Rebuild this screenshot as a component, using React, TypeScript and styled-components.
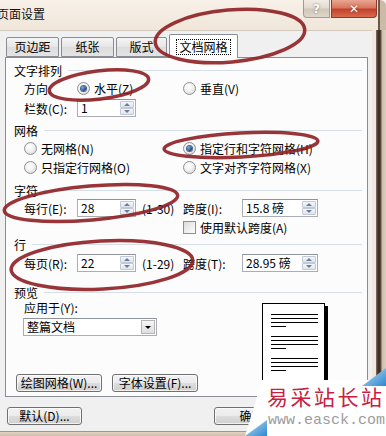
import React from "react"
import styled, { createGlobalStyle } from "styled-components"

const GlobalStyle = createGlobalStyle`
  html, body {
    margin: 0;
    padding: 0;
    background: #fff;
  }
  body {
    font-family: "Noto Sans CJK SC", "Liberation Sans", sans-serif;
    font-size: 12px;
    color: #000;
  }
`

const Window = styled.div`
  position: relative;
  width: 386px;
  height: 436px;
  overflow: hidden;
  display: flex;
  flex-direction: column;
  background: #ece2d5;
`

const TitleBar = styled.div`
  height: 30px;
  display: flex;
  align-items: flex-start;
  background: linear-gradient(#f8f1e9, #f0e6da);
`

const Title = styled.div`
  margin-left: -3px;
  margin-top: 6px;
  font-size: 12px;
  line-height: 16px;
  color: #111;
`

const CaptionButton = styled.div<{ $close?: boolean; $w: number }>`
  width: ${(p) => p.$w}px;
  height: 18px;
  box-sizing: border-box;
  display: flex;
  align-items: center;
  justify-content: center;
  border: 1px solid ${(p) => (p.$close ? "#8c3a2a" : "#a89a8a")};
  border-top: none;
  margin-left: ${(p) => (p.$close ? 1 : 0)}px;
  border-radius: ${(p) => (p.$close ? "0 0 4px 0" : "0 0 0 4px")};
  background: ${(p) =>
    p.$close
      ? "linear-gradient(#e9a591 0%, #d9775f 45%, #c4402a 55%, #d66a4f 100%)"
      : "linear-gradient(#f3ece4 0%, #e4dbd1 45%, #d2c6b9 55%, #e0d6cb 100%)"};
  color: #fff;
  font-family: "DejaVu Sans", sans-serif;
  font-weight: bold;
  font-size: 12px;
  text-shadow: 0 0 2px rgba(60, 40, 30, 0.7);
`

const CaptionGap = styled.div`
  flex: 1;
`

const TitleEdge = styled.div`
  width: 9px;
  height: 30px;
  background: linear-gradient(90deg, #ede3d6 0 1px, #6b5a4a 1px 3px, #c9bba8 3px);
  border-top-right-radius: 6px;
`

const Body = styled.div`
  display: flex;
  height: 401px;
`

const Client = styled.div`
  width: 372px;
  background: #f0f0f0;
  display: flex;
  flex-direction: column;
  border-top: 1px solid #d4cabd;
  box-sizing: border-box;
`

const RightFrame = styled.div`
  flex: 1;
  background: linear-gradient(
    90deg,
    #efe8de 0 4px,
    #8a7560 4px,
    #3d3026 6px 8px,
    #6b5a4a 9px,
    #cbbda9 10px,
    #dccfbd 14px
  );
`

const BottomFrame = styled.div`
  height: 5px;
  background: linear-gradient(#a89580 0 1px, #e3d6c4 1px, #cdbca6);
`

const TabStrip = styled.div`
  height: 26px;
  display: flex;
  align-items: flex-end;
  padding-left: 6px;
  position: relative;
  z-index: 1;
`

const Tab = styled.div<{ $active?: boolean; $w: number }>`
  width: ${(p) => p.$w}px;
  height: ${(p) => (p.$active ? 24 : 20)}px;
  margin-right: ${(p) => (p.$active ? 0 : 2)}px;
  margin-bottom: ${(p) => (p.$active ? -1 : 0)}px;
  box-sizing: border-box;
  border: 1px solid #898c95;
  border-bottom: ${(p) => (p.$active ? "none" : "1px solid #898c95")};
  border-radius: 2px 2px 0 0;
  background: ${(p) =>
    p.$active ? "#fff" : "linear-gradient(#f4f4f4, #e6e6e6 50%, #dcdcdc 51%, #e4e4e4)"};
  display: flex;
  align-items: center;
  justify-content: center;
  font-size: 12px;
  line-height: 14px;
`

const FocusText = styled.span`
  outline: 1px dotted #000;
  padding: 0 2px;
`

const Panel = styled.div`
  margin-left: 5px;
  width: 363px;
  height: 340px;
  box-sizing: border-box;
  border: 1px solid #898c95;
  background: #fcfcfc;
  padding: 4px 5px 0 0;
  display: flex;
  flex-direction: column;
`

const Header = styled.div<{ $mt?: number }>`
  height: 16px;
  margin-top: ${(p) => p.$mt ?? 0}px;
  padding-left: 8px;
  display: flex;
  align-items: center;
`

const Rule = styled.div`
  flex: 1;
  height: 1px;
  margin-left: 6px;
  background: #d5dfe5;
`

const Row = styled.div<{ $h: number; $mt?: number }>`
  height: ${(p) => p.$h}px;
  margin-top: ${(p) => p.$mt ?? 0}px;
  padding-left: 18px;
  display: flex;
  align-items: center;
`

const Cell = styled.div<{ $w?: number }>`
  width: ${(p) => (p.$w ? `${p.$w}px` : "auto")};
  flex: none;
  display: flex;
  align-items: center;
  white-space: nowrap;
`

const RadioDot = styled.span<{ $on?: boolean }>`
  width: 13px;
  height: 13px;
  box-sizing: border-box;
  border-radius: 50%;
  border: 1px solid #8f8f8f;
  background: radial-gradient(circle at 40% 35%, #ffffff 0, #f1f1f1 45%, #cfcfcf 100%);
  margin-right: 4px;
  display: flex;
  align-items: center;
  justify-content: center;
  &::after {
    content: "";
    display: ${(p) => (p.$on ? "block" : "none")};
    width: 5px;
    height: 5px;
    border-radius: 50%;
    background: radial-gradient(circle at 35% 35%, #7fb2e5, #1c3f73 70%);
    box-shadow: 0 0 0 1px #44668f;
  }
`

const CheckSquare = styled.span`
  width: 13px;
  height: 13px;
  box-sizing: border-box;
  border: 1px solid #8f8f8f;
  background: linear-gradient(135deg, #dcdcdc, #fdfdfd);
  margin-right: 4px;
`

const Spin = styled.div<{ $w: number }>`
  width: ${(p) => p.$w}px;
  height: 18px;
  box-sizing: border-box;
  border: 1px solid #abadb3;
  border-top-color: #8e9399;
  background: #fff;
  display: flex;
`

const SpinValue = styled.div`
  flex: 1;
  padding-left: 3px;
  line-height: 16px;
`

const SpinButtons = styled.div`
  width: 16px;
  display: flex;
  flex-direction: column;
  padding: 1px;
  box-sizing: border-box;
  gap: 0;
`

const SpinBtn = styled.div<{ $down?: boolean }>`
  flex: 1;
  border: 1px solid #c0c9d4;
  border-radius: 1px;
  background: linear-gradient(#f4f7fb, #dde5ee);
  display: flex;
  align-items: center;
  justify-content: center;
  &::after {
    content: "";
    border-left: 3px solid transparent;
    border-right: 3px solid transparent;
    ${(p) =>
      p.$down ? "border-top: 3px solid #6c7d95;" : "border-bottom: 3px solid #6c7d95;"}
  }
`

const Range = styled.span`
  margin-left: 6px;
`

const Preview = styled.div`
  display: flex;
  flex: 1;
`

const PreviewLeft = styled.div`
  width: 246px;
  padding-left: 10px;
  display: flex;
  flex-direction: column;
`

const ApplyLabel = styled.div`
  height: 16px;
  line-height: 16px;
  margin-left: 8px;
`

const SelectBox = styled.div`
  margin-top: 2px;
  margin-left: 7px;
  width: 134px;
  height: 18px;
  box-sizing: border-box;
  border: 1px solid #abadb3;
  border-top-color: #8e9399;
  background: #fff;
  display: flex;
`

const SelectValue = styled.div`
  flex: 1;
  padding-left: 3px;
  line-height: 16px;
`

const DropButton = styled.div`
  width: 14px;
  margin: 1px;
  box-sizing: border-box;
  border: 1px solid #b5b5b5;
  background: linear-gradient(#f6f6f6, #dedede);
  display: flex;
  align-items: center;
  justify-content: center;
  &::after {
    content: "";
    border-left: 3px solid transparent;
    border-right: 3px solid transparent;
    border-top: 3px solid #000;
  }
`

const ButtonRow = styled.div<{ $mt: number; $pl: number }>`
  display: flex;
  margin-top: ${(p) => p.$mt}px;
  padding-left: ${(p) => p.$pl}px;
`

const PushButton = styled.div<{ $w: number; $ml?: number }>`
  width: ${(p) => p.$w}px;
  height: 18px;
  margin-left: ${(p) => p.$ml ?? 0}px;
  box-sizing: border-box;
  border: 1px solid #707070;
  border-radius: 3px;
  background: linear-gradient(#f2f2f2 0%, #ebebeb 50%, #dddddd 51%, #cfcfcf 100%);
  box-shadow: inset 0 0 0 1px rgba(255, 255, 255, 0.7);
  display: flex;
  align-items: center;
  justify-content: center;
  font-size: 12px;
  line-height: 14px;
  white-space: nowrap;
`

const Page = styled.div`
  margin-top: 3px;
  width: 63px;
  height: 88px;
  box-sizing: border-box;
  border: 1px solid #000;
  background: #fff;
  box-shadow: 3px 3px 0 #000;
  padding: 10px 0 0 8px;
  display: flex;
  flex-direction: column;
`

const PageLine = styled.div<{ $short?: boolean; $gap?: number }>`
  width: ${(p) => (p.$short ? 15 : 47)}px;
  height: 1px;
  background: #000;
  margin-top: ${(p) => p.$gap ?? 3}px;
`

const Overlay = styled.svg`
  position: absolute;
  left: 0;
  top: 0;
  pointer-events: none;
  z-index: 5;
`

const Watermark = styled.div`
  position: absolute;
  left: 243px;
  top: 368px;
  width: 143px;
  height: 68px;
  z-index: 6;
`

const WatermarkBg = styled.svg`
  position: absolute;
  left: 0;
  top: 0;
`

const MarkTitle = styled.div`
  position: absolute;
  left: 24px;
  top: 15px;
  font-family: "Noto Sans CJK SC", sans-serif;
  font-size: 21px;
  line-height: 26px;
  letter-spacing: 2.5px;
  color: #c8203f;
  white-space: nowrap;
`

const MarkUrl = styled.div`
  position: absolute;
  left: 25px;
  top: 44px;
  font-family: "Liberation Mono", monospace;
  font-size: 15px;
  line-height: 18px;
  color: #9c9c9c;
  white-space: nowrap;
`

const Spinner = ({ w, value }: { w: number; value: string }) => (
  <Spin $w={w}>
    <SpinValue>{value}</SpinValue>
    <SpinButtons>
      <SpinBtn />
      <SpinBtn $down />
    </SpinButtons>
  </Spin>
)

const Radio = ({ on, label }: { on?: boolean; label: string }) => (
  <>
    <RadioDot $on={on} />
    {label}
  </>
)

const ellipses = [
  { cx: 230, cy: 36, rx: 75, ry: 26, rot: -5 },
  { cx: 99, cy: 85, rx: 50, ry: 14, rot: -7 },
  { cx: 241, cy: 145, rx: 77, ry: 12, rot: -3 },
  { cx: 91, cy: 203, rx: 87, ry: 17, rot: -5 },
  { cx: 102, cy: 265, rx: 91, ry: 24, rot: -3 },
]

export default function App() {
  return (
    <>
      <GlobalStyle />
      <Window>
        <TitleBar>
          <Title>页面设置</Title>
          <CaptionGap />
          <CaptionButton $w={27}>?</CaptionButton>
          <CaptionButton $w={46} $close>
            ✕
          </CaptionButton>
          <TitleEdge />
        </TitleBar>
        <Body>
          <Client>
            <TabStrip>
              <Tab $w={53}>页边距</Tab>
              <Tab $w={53}>纸张</Tab>
              <Tab $w={51}>版式</Tab>
              <Tab $w={69} $active>
                <FocusText>文档网格</FocusText>
              </Tab>
            </TabStrip>
            <Panel>
              <Header>
                文字排列
                <Rule />
              </Header>
              <Row $h={20}>
                <Cell $w={53}>方向:</Cell>
                <Cell $w={106}>
                  <Radio on label="水平(Z)" />
                </Cell>
                <Cell>
                  <Radio label="垂直(V)" />
                </Cell>
              </Row>
              <Row $h={20}>
                <Cell $w={53}>栏数(C):</Cell>
                <Spinner w={59} value="1" />
              </Row>

              <Header $mt={4}>
                网格
                <Rule />
              </Header>
              <Row $h={20}>
                <Cell $w={159}>
                  <Radio label="无网格(N)" />
                </Cell>
                <Cell>
                  <Radio on label="指定行和字符网格(H)" />
                </Cell>
              </Row>
              <Row $h={18}>
                <Cell $w={159}>
                  <Radio label="只指定行网格(O)" />
                </Cell>
                <Cell>
                  <Radio label="文字对齐字符网格(X)" />
                </Cell>
              </Row>

              <Header $mt={6}>
                字符
                <Rule />
              </Header>
              <Row $h={20}>
                <Cell $w={53}>每行(E):</Cell>
                <Cell $w={106}>
                  <Spinner w={59} value="28" />
                  <Range>(1-30)</Range>
                </Cell>
                <Cell $w={59}>跨度(I):</Cell>
                <Spinner w={76} value="15.8 磅" />
              </Row>
              <Row $h={18}>
                <Cell $w={159} />
                <Cell>
                  <CheckSquare />
                  使用默认跨度(A)
                </Cell>
              </Row>

              <Header>
                行
                <Rule />
              </Header>
              <Row $h={20} $mt={1}>
                <Cell $w={53}>每页(R):</Cell>
                <Cell $w={106}>
                  <Spinner w={59} value="22" />
                  <Range>(1-29)</Range>
                </Cell>
                <Cell $w={59}>跨度(T):</Cell>
                <Spinner w={76} value="28.95 磅" />
              </Row>

              <Header $mt={11}>
                预览
                <Rule />
              </Header>
              <Preview>
                <PreviewLeft>
                  <ApplyLabel>应用于(Y):</ApplyLabel>
                  <SelectBox>
                    <SelectValue>整篇文档</SelectValue>
                    <DropButton />
                  </SelectBox>
                  <ButtonRow $mt={38} $pl={0}>
                    <PushButton $w={86}>绘图网格(W)...</PushButton>
                    <PushButton $w={86} $ml={10}>
                      字体设置(F)...
                    </PushButton>
                  </ButtonRow>
                </PreviewLeft>
                <Page>
                  <PageLine $gap={0} />
                  <PageLine />
                  <PageLine />
                  <PageLine $short />
                  <PageLine $gap={9} />
                  <PageLine />
                  <PageLine />
                  <PageLine $short />
                  <PageLine $gap={9} />
                  <PageLine />
                  <PageLine />
                  <PageLine $short />
                  <PageLine $gap={9} $short />
                </Page>
              </Preview>
            </Panel>
            <ButtonRow $mt={10} $pl={7}>
              <PushButton $w={75}>默认(D)...</PushButton>
              <PushButton $w={75} $ml={132}>
                确定
              </PushButton>
            </ButtonRow>
          </Client>
          <RightFrame />
        </Body>
        <BottomFrame />

        <Overlay width={386} height={436} viewBox="0 0 386 436">
          {ellipses.map((e, i) => (
            <ellipse
              key={i}
              cx={e.cx}
              cy={e.cy}
              rx={e.rx}
              ry={e.ry}
              transform={`rotate(${e.rot} ${e.cx} ${e.cy})`}
              fill="none"
              stroke="#8e1f22"
              strokeWidth={3.5}
              opacity={0.9}
            />
          ))}
        </Overlay>

        <Watermark>
          <WatermarkBg width={143} height={68} viewBox="0 0 143 68">
            <defs>
              <linearGradient id="wmBlue" x1="0" y1="0" x2="1" y2="1">
                <stop offset="0" stopColor="#bfe3f7" />
                <stop offset="1" stopColor="#2f86cf" />
              </linearGradient>
            </defs>
            <polygon points="19,12 143,12 143,68 2,68" fill="#fff" />
            <polygon points="119,18 143,0 143,18" fill="url(#wmBlue)" />
            <polygon points="2,68 24,52 24,68" fill="url(#wmBlue)" />
          </WatermarkBg>
          <MarkTitle>易采站长站</MarkTitle>
          <MarkUrl>www.easck.com</MarkUrl>
        </Watermark>
      </Window>
    </>
  )
}
